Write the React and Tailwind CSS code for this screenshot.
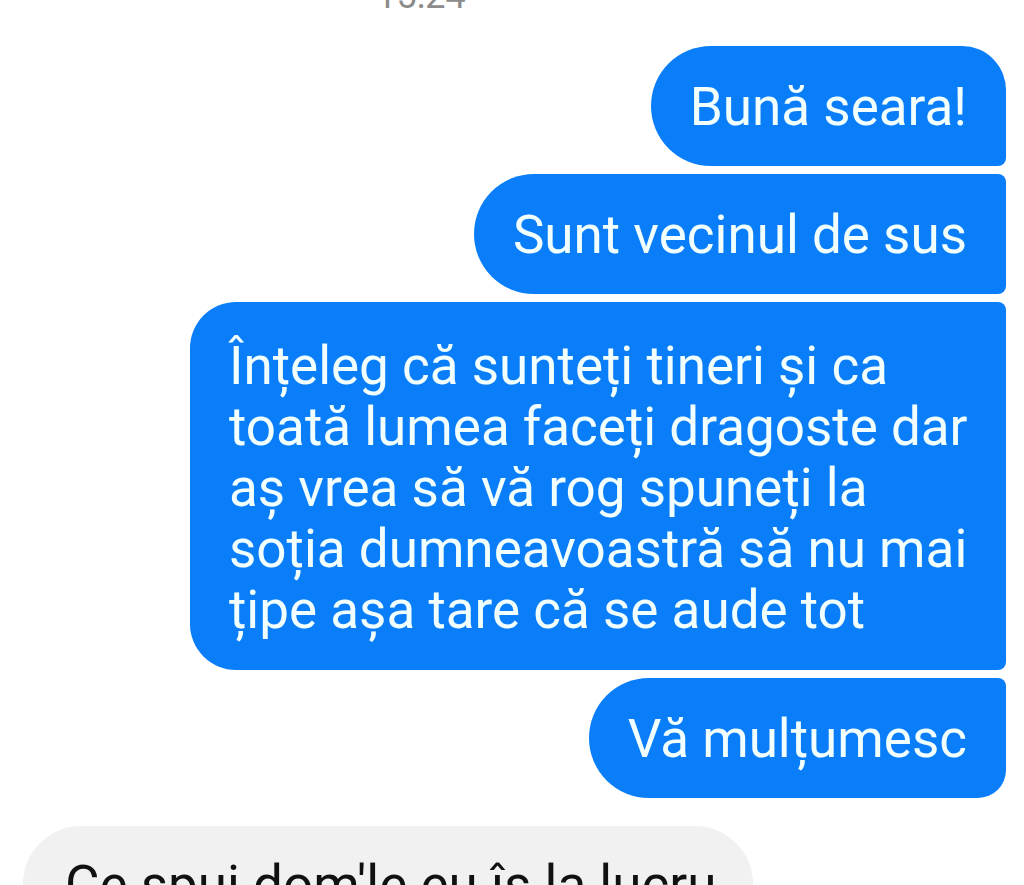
import React from "react";

const lines = [
  "Înțeleg că sunteți tineri și ca",
  "toată lumea faceți dragoste dar",
  "aș vrea să vă rog spuneți la",
  "soția dumneavoastră să nu mai",
  "țipe așa tare că se aude tot",
];

function Bubble({ shape, children, pad = "pt-[31px] pb-[28px]" }) {
  return (
    <div
      className={`bg-[#0a7df8] text-[#f2ffff] text-[53px] leading-[61px] whitespace-nowrap px-[39px] ${pad} ${shape}`}
    >
      {children}
    </div>
  );
}

export default function App() {
  return (
    <div
      className="w-[1024px] h-[885px] overflow-hidden bg-white"
      style={{ fontFamily: "Roboto, 'Noto Sans', sans-serif" }}
    >
      <div className="h-[14px] overflow-hidden flex justify-center pr-[182px]">
        <div className="text-[36px] leading-[36px] -mt-[22px] text-[#8c8c8c]">15:24</div>
      </div>
      <div className="flex flex-col items-end gap-[8px] pr-[18px] pt-[32px]">
        <Bubble shape="rounded-l-[60px] rounded-tr-[44px] rounded-br-[8px]">Bună seara!</Bubble>
        <Bubble shape="rounded-l-[60px] rounded-r-[8px]">Sunt vecinul de sus</Bubble>
        <Bubble shape="rounded-l-[46px] rounded-r-[8px] w-[816px]" pad="pt-[34px] pb-[29px]">
          {lines.map((l, i) => (
            <div key={i}>{l}</div>
          ))}
        </Bubble>
        <Bubble shape="rounded-l-[60px] rounded-tr-[8px] rounded-br-[28px]">Vă mulțumesc</Bubble>
      </div>
      <div className="pl-[23px] pt-[28px]">
        <div className="w-[730px] bg-[#f1f1f1] rounded-t-[58px] pl-[42px] pt-[29px] pb-[30px] text-[53px] leading-[61px] text-[#111] whitespace-nowrap">
          Ce spui dom'le eu îs la lucru
        </div>
      </div>
    </div>
  );
}
